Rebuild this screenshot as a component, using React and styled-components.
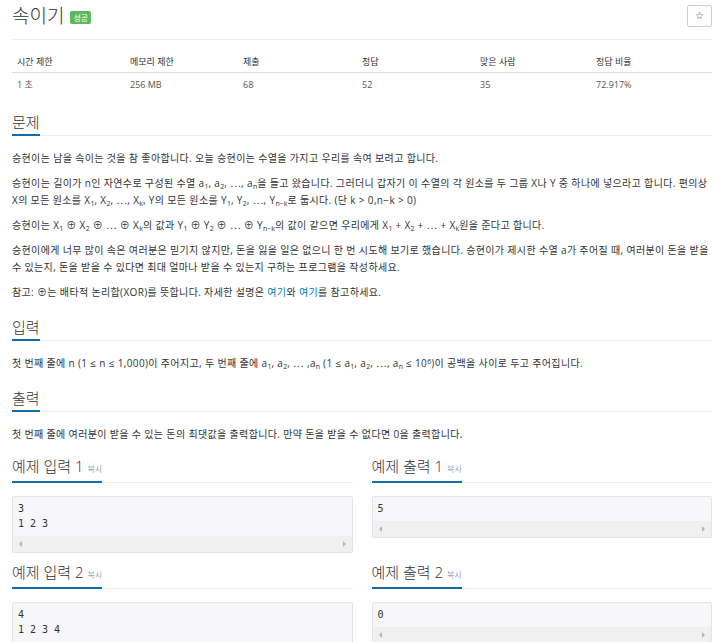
import React from "react";
import styled, { createGlobalStyle } from "styled-components";

const GlobalStyle = createGlobalStyle`
  body {
    margin: 0;
    background: #fff;
    font-family: "Open Sans", "Noto Sans CJK KR", sans-serif;
    color: #333;
  }
`;

const Page = styled.div`
  width: 700px;
  padding: 0 8px 0 12px;
`;

const Header = styled.div`
  display: flex;
  justify-content: space-between;
  align-items: center;
  height: 40px;
  box-sizing: border-box;
  padding-bottom: 7px;
  border-bottom: 1px solid #eee;
`;

const Title = styled.h1`
  display: flex;
  align-items: center;
  gap: 6px;
  margin: 0;
  font-size: 19px;
  font-weight: 300;
  line-height: 22px;
  color: #333;
`;

const Badge = styled.span`
  display: inline-block;
  padding: 1px 3px;
  border-radius: 2px;
  background: #5cb85c;
  color: #fff;
  font-size: 8px;
  line-height: 11px;
  font-weight: 400;
  margin-top: 3px;
`;

const StarButton = styled.button`
  width: 25px;
  height: 22px;
  padding: 0;
  border: 1px solid #ccc;
  border-radius: 2px;
  background: #fff;
  color: #333;
  font-size: 10px;
  line-height: 1;
  font-family: "DejaVu Sans", sans-serif;
`;

const InfoTable = styled.table`
  width: 100%;
  border-collapse: collapse;
  margin: 11px 0 9px;
  font-size: 9px;

  th,
  td {
    text-align: left;
    padding: 0 5px;
  }
  th {
    height: 21px;
    border-bottom: 1px solid #ddd;
    font-weight: normal;
    color: #333;
  }
  td {
    height: 22px;
    color: #555;
  }
`;

const Col = styled.col`
  width: ${(p) => p.$w}px;
`;

const SectionBox = styled.section`
  display: flow-root;
`;

const Headline = styled.div`
  display: flex;
  margin: 8px 0 14px;
  border-bottom: 1px solid #eee;
`;

const HeadText = styled.h2`
  margin: 0 0 -1px;
  padding-bottom: 2px;
  border-bottom: 2px solid #0f6ea8;
  font-size: 15px;
  font-weight: 300;
  line-height: 20px;
  color: #333;
`;

const Copy = styled.span`
  font-size: 8px;
  color: #4a7ca8;
  margin-left: 4px;
`;

const Text = styled.p`
  margin: 0 0 8px;
  font-size: 10px;
  letter-spacing: 0.35px;
  line-height: 17px;
  color: #333;

  sub,
  sup {
    font-size: 70%;
    line-height: 0;
    position: relative;
    vertical-align: baseline;
    letter-spacing: 0;
  }
  sub {
    top: 0.3em;
  }
  sup {
    top: -0.5em;
  }
`;

const Link = styled.a`
  color: #0076c0;
  text-decoration: none;
`;

const SampleGrid = styled.div`
  display: grid;
  grid-template-columns: 1fr 1fr;
  column-gap: 19px;
  row-gap: 9px;
  margin-top: 5px;

  ${Headline} {
    margin: 0 0 13px;
  }
`;

const SampleBox = styled.div`
  border: 1px solid #e3e3e8;
  border-radius: 2px;
  background: #f7f7f9;
`;

const Pre = styled.pre`
  margin: 0;
  padding: 4px 5px 5px;
  font-family: "DejaVu Sans Mono", monospace;
  font-size: 10px;
  line-height: 15px;
  color: #333;
`;

const ScrollTrack = styled.div`
  display: flex;
  justify-content: space-between;
  align-items: center;
  height: 16px;
  padding: 0 6px;
  background: #f0f0f1;
`;

const Arrow = styled.span`
  width: 0;
  height: 0;
  border-top: 3px solid transparent;
  border-bottom: 3px solid transparent;
  ${(p) =>
    p.$dir === "left"
      ? "border-right: 3px solid #b5b5b5;"
      : "border-left: 3px solid #b5b5b5;"}
`;

const Section = ({ title, children }) => (
  <SectionBox>
    <Headline>
      <HeadText>{title}</HeadText>
    </Headline>
    {children}
  </SectionBox>
);

const Sample = ({ title, data }) => (
  <div>
    <Headline>
      <HeadText>
        {title}
        <Copy>복사</Copy>
      </HeadText>
    </Headline>
    <SampleBox>
      <Pre>{data}</Pre>
      <ScrollTrack>
        <Arrow $dir="left" />
        <Arrow $dir="right" />
      </ScrollTrack>
    </SampleBox>
  </div>
);

const info = [
  ["시간 제한", "1 초", 113],
  ["메모리 제한", "256 MB", 113],
  ["제출", "68", 119],
  ["정답", "52", 118],
  ["맞은 사람", "35", 116],
  ["정답 비율", "72.917%", 121],
];

const samples = [
  ["예제 입력 1", "3\n1 2 3"],
  ["예제 출력 1", "5"],
  ["예제 입력 2", "4\n1 2 3 4"],
  ["예제 출력 2", "0"],
];

export default function App() {
  return (
    <Page>
      <GlobalStyle />
      <Header>
        <Title>
          속이기 <Badge>성공</Badge>
        </Title>
        <StarButton>☆</StarButton>
      </Header>

      <InfoTable>
        <colgroup>
          {info.map(([h, , w]) => (
            <Col key={h} $w={w} />
          ))}
        </colgroup>
        <thead>
          <tr>
            {info.map(([h]) => (
              <th key={h}>{h}</th>
            ))}
          </tr>
        </thead>
        <tbody>
          <tr>
            {info.map(([h, v]) => (
              <td key={h}>{v}</td>
            ))}
          </tr>
        </tbody>
      </InfoTable>

      <Section title="문제">
        <Text>
          승현이는 남을 속이는 것을 참 좋아합니다. 오늘 승현이는 수열을 가지고 우리를 속여 보려고 합니다.
        </Text>
        <Text>
          승현이는 길이가 n인 자연수로 구성된 수열 a<sub>1</sub>, a<sub>2</sub>, ⋯, a<sub>n</sub>을 들고
          왔습니다. 그러더니 갑자기 이 수열의 각 원소를 두 그룹 X나 Y 중 하나에 넣으라고 합니다. 편의상
          X의 모든 원소를 X<sub>1</sub>, X<sub>2</sub>, ⋯, X<sub>k</sub>, Y의 모든 원소를 Y<sub>1</sub>,
          Y<sub>2</sub>, ⋯, Y<sub>n−k</sub>로 둡시다. (단 k &gt; 0,n−k &gt; 0)
        </Text>
        <Text>
          승현이는 X<sub>1</sub> ⊕ X<sub>2</sub> ⊕ ⋯ ⊕ X<sub>k</sub>의 값과 Y<sub>1</sub> ⊕ Y<sub>2</sub> ⊕ ⋯
          ⊕ Y<sub>n−k</sub>의 값이 같으면 우리에게 X<sub>1</sub> + X<sub>2</sub> + ⋯ + X<sub>k</sub>원을 준다고
          합니다.
        </Text>
        <Text>
          승현이에게 너무 많이 속은 여러분은 믿기지 않지만, 돈을 잃을 일은 없으니 한 번 시도해 보기로
          했습니다. 승현이가 제시한 수열 a가 주어질 때, 여러분이 돈을 받을 수 있는지, 돈을 받을 수 있다면
          최대 얼마나 받을 수 있는지 구하는 프로그램을 작성하세요.
        </Text>
        <Text>
          참고: ⊕는 배타적 논리합(XOR)를 뜻합니다. 자세한 설명은 <Link>여기</Link>와 <Link>여기</Link>를
          참고하세요.
        </Text>
      </Section>

      <Section title="입력">
        <Text>
          첫 번째 줄에 n (1 ≤ n ≤ 1,000)이 주어지고, 두 번째 줄에 a<sub>1</sub>, a<sub>2</sub>, ⋯ ,a
          <sub>n</sub> (1 ≤ a<sub>1</sub>, a<sub>2</sub>, ⋯, a<sub>n</sub> ≤ 10<sup>6</sup>)이 공백을 사이로
          두고 주어집니다.
        </Text>
      </Section>

      <Section title="출력">
        <Text>
          첫 번째 줄에 여러분이 받을 수 있는 돈의 최댓값을 출력합니다. 만약 돈을 받을 수 없다면 0을
          출력합니다.
        </Text>
      </Section>

      <SampleGrid>
        {samples.map(([t, d]) => (
          <Sample key={t} title={t} data={d} />
        ))}
      </SampleGrid>
    </Page>
  );
}
